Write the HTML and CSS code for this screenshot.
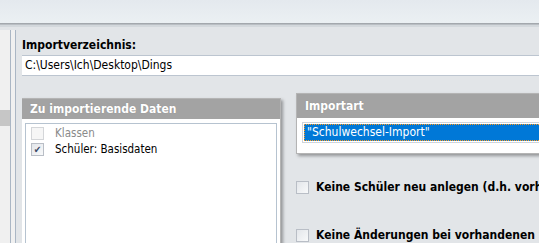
FILE: index.html
```html
<!DOCTYPE html>
<html lang="de">
  <head>
    <meta charset="utf-8" />
    <title>Import</title>
    <link rel="stylesheet" href="styles.css">
  </head>
  <body>
    <div class="topbar"></div>
    <div class="main">
      <!-- left navigation strip -->
      <div class="sidebar">
        <div class="nav-strip"><div class="nav-sel"></div></div>
        <div class="nav-gap"></div>
        <div class="nav-edge"></div>
      </div>

      <div class="content">
        <label class="field-label">Importverzeichnis:</label>
        <div class="path-input">C:\Users\Ich\Desktop\Dings</div>

        <div class="groups">
          <div class="group group-data">
            <div class="group-head">Zu importierende Daten</div>
            <div class="group-body">
              <div class="listbox">
                <div class="item disabled"><span class="chk"></span>Klassen</div>
                <div class="item"><span class="chk checked">&#10004;</span>Schüler: Basisdaten</div>
              </div>
            </div>
          </div>

          <div class="right-col">
            <div class="group group-type">
              <div class="group-head">Importart</div>
              <div class="group-body">
                <div class="combo"><div class="combo-sel">"Schulwechsel-Import"</div></div>
              </div>
            </div>
            <div class="option"><span class="chk"></span>Keine Schüler neu anlegen (d.h. vorhandene Schüler werden nur aktualisiert)</div>
            <div class="option"><span class="chk"></span>Keine Änderungen bei vorhandenen Schülern</div>
          </div>
        </div>
      </div>
    </div>
  </body>
</html>
```

FILE: styles.css
```css
body {
  margin: 0;
  width: 539px;
  height: 243px;
  overflow: hidden;
  background: #e2e5e8;
  font-family: "DejaVu Sans Condensed", "DejaVu Sans", sans-serif;
  font-size: 11px;
  color: #000000;
  display: flex;
  flex-direction: column;
}

/* Ribbon area at the top */
.topbar {
  height: 23px;
  flex: none;
  background: linear-gradient(to bottom, #e4e9ee, #ebf0f3);
  border-bottom: 1px solid #a3a8ad;
  box-shadow: 0 1px 0 #b9bec3, 0 3px 0 #d3d8dc;
  margin-bottom: 6px;
}

.main {
  flex: 1;
  display: flex;
  min-height: 0;
}

.sidebar {
  width: 22px;
  flex: none;
  display: flex;
}

.nav-strip {
  width: 10px;
  background: #f0f0f0;
  border-right: 1px solid #aab6c4;
  padding-top: 80px;
}

.nav-sel {
  height: 16px;
  background: #c6c6c6;
}

.nav-gap {
  width: 4px;
  background: #f0f0f0;
  border-right: 1px solid #aab6c4;
}

.nav-edge {
  flex: 1;
}

.content {
  flex: 1;
  min-width: 0;
  overflow: hidden;
}

.field-label {
  display: block;
  font-weight: bold;
  font-size: 12px;
  margin-top: 8px;
  height: 17px;
}

.path-input {
  height: 19px;
  line-height: 19px;
  background: #ffffff;
  border-top: 1px solid #bcc5d0;
  border-bottom: 1px solid #bcc5d0;
  padding-left: 3px;
  font-size: 12px;
}

.groups {
  display: flex;
  gap: 15px;
  margin-top: 17px;
  margin-left: -1px;
}

.group {
  background: #ffffff;
  border: 1px solid #b4b4b4;
  box-shadow: 2px 2px 3px rgba(0, 0, 0, 0.35);
}

.group-head {
  background: #a3a3a3;
  color: #ffffff;
  font-weight: bold;
  font-size: 12px;
  padding-left: 8px;
  text-shadow: 0 0 1px #8a8a8a;
}

.group-data {
  width: 258px;
  margin-top: 5px;
  height: 160px;
}

.group-data .group-head {
  height: 20px;
  line-height: 20px;
}

.group-data .group-body {
  padding: 4px 3px 0 3px;
}

.listbox {
  border: 1px solid #b6c3d0;
  height: 140px;
  padding: 1px 5px;
}

.item {
  display: flex;
  align-items: center;
  height: 16px;
  font-size: 11.5px;
}

.item.disabled {
  color: #8a8a8a;
}

.chk {
  width: 11px;
  height: 11px;
  border: 1px solid #b9bec6;
  background: linear-gradient(135deg, #e3e6ea, #f8f9fa);
  margin-right: 11px;
  flex: none;
  font-size: 10px;
  line-height: 11px;
  text-align: center;
  color: #3c4a66;
}

.item.disabled .chk {
  border-color: #d4d6d9;
  background: #f6f6f6;
}

.right-col {
  flex: 1;
  min-width: 0;
}

.group-type {
  margin-right: -40px;
}

.group-type .group-head {
  height: 24px;
  line-height: 24px;
}

.group-type .group-body {
  padding: 4px 5px 10px 5px;
}

.combo {
  border: 1px solid #cfd4da;
  padding: 1px;
}

.combo-sel {
  height: 17px;
  line-height: 17px;
  background: #0078d7;
  color: #ffffff;
  font-size: 12px;
  padding-left: 3px;
  outline: 1px dotted #ff9a1e;
  outline-offset: -1px;
}

.option {
  display: flex;
  align-items: center;
  font-weight: bold;
  white-space: nowrap;
  font-size: 12px;
  margin-top: 26px;
  height: 14px;
}

.option + .option {
  margin-top: 34px;
}

.option .chk {
  margin-right: 7px;
}
```
